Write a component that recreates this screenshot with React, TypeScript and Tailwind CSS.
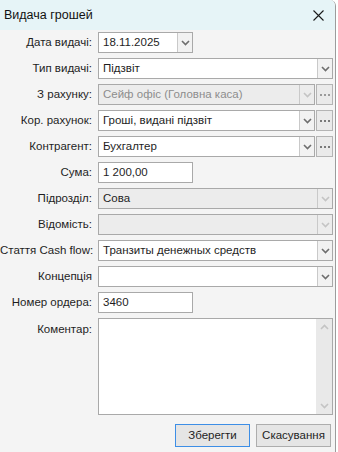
import { ReactNode } from "react";

const font = { fontFamily: '"Liberation Sans", Arial, sans-serif' };

function Chevron({ up = false, dim = false }: { up?: boolean; dim?: boolean }) {
  return (
    <svg width="9" height="6" viewBox="0 0 9 6" className={up ? "rotate-180" : ""}>
      <polyline
        points="1,1 4.5,4.5 8,1"
        fill="none"
        stroke={dim ? "#c4c4c4" : "#6e6e6e"}
        strokeWidth="1.6"
      />
    </svg>
  );
}

function Dots({ dim = false }: { dim?: boolean }) {
  return (
    <button className="w-[17px] h-[21px] shrink-0 border border-[#b4b4b4] bg-[#eaeaea] flex items-center justify-center gap-[2px]">
      {[0, 1, 2].map((i) => (
        <span key={i} className={`w-[2px] h-[2px] ${dim ? "bg-[#9a9a9a]" : "bg-[#7a7a7a]"}`} />
      ))}
    </button>
  );
}

function Row({ label, children, top = false }: { label: string; children: ReactNode; top?: boolean }) {
  return (
    <div className={`flex ${top ? "items-start" : "items-center"}`}>
      <div className={`w-[93px] shrink-0 text-right pr-[1px] text-[11.5px] text-[#1e1e1e] whitespace-nowrap ${top ? "pt-[3px]" : ""}`}>
        {label}
      </div>
      <div className="ml-[5px] flex-1 flex gap-px">{children}</div>
    </div>
  );
}

function Select({
  value = "",
  disabled = false,
  greyText,
  width,
}: {
  value?: string;
  disabled?: boolean;
  greyText?: boolean;
  width?: string;
}) {
  const grey = greyText ?? disabled;
  return (
    <div
      className={`h-[21px] flex border border-[#a9a9a9] ${disabled ? "bg-[#ececec]" : "bg-white"} ${width ?? "flex-1"}`}
    >
      <div className={`flex-1 px-[4px] flex items-center text-[11.5px] truncate ${grey ? "text-[#8c8c8c]" : "text-[#1e1e1e]"}`}>
        {value}
      </div>
      <div className={`w-[15px] border-l border-[#c9c9c9] flex items-center justify-center ${disabled ? "bg-[#ececec]" : "bg-[#f2f2f2]"}`}>
        <Chevron dim={disabled} />
      </div>
    </div>
  );
}

function Input({ value }: { value: string }) {
  return (
    <div className="w-[95px] h-[21px] border border-[#a9a9a9] bg-white px-[4px] flex items-center text-[11.5px] text-[#1e1e1e]">
      {value}
    </div>
  );
}

export default function App() {
  return (
    <div className="w-[338px] h-[452px] bg-white" style={font}>
      <div className="w-[336px] h-[452px] flex flex-col border-r border-[#9c9c9c] rounded-tr-[6px] overflow-hidden">
        <div className="h-[30px] shrink-0 bg-[#e6f4f7] flex items-center justify-between pl-[4px] pr-[11px]">
          <span className="text-[12.5px] text-[#111]">Видача грошей</span>
          <svg width="11" height="11" viewBox="0 0 11 11">
            <path d="M0.5 0.5 L10.5 10.5 M10.5 0.5 L0.5 10.5" stroke="#1a1a1a" strokeWidth="1.1" />
          </svg>
        </div>

        <div className="flex-1 bg-[#f4f4f4] pt-[2px] pr-[2px] flex flex-col gap-[5px]">
          <Row label="Дата видачі:">
            <Select value="18.11.2025" width="w-[95px]" />
          </Row>
          <Row label="Тип видачі:">
            <Select value="Підзвіт" />
          </Row>
          <Row label="З рахунку:">
            <Select value="Сейф офіс (Головна каса)" disabled />
            <Dots dim />
          </Row>
          <Row label="Кор. рахунок:">
            <Select value="Гроші, видані підзвіт" />
            <Dots />
          </Row>
          <Row label="Контрагент:">
            <Select value="Бухгалтер" />
            <Dots />
          </Row>
          <Row label="Сума:">
            <Input value="1 200,00" />
          </Row>
          <Row label="Підрозділ:">
            <Select value="Сова" disabled greyText={false} />
          </Row>
          <Row label="Відомість:">
            <Select disabled />
          </Row>
          <Row label="Стаття Cash flow:">
            <Select value="Транзиты денежных средств" />
          </Row>
          <Row label="Концепція">
            <Select />
          </Row>
          <Row label="Номер ордера:">
            <Input value="3460" />
          </Row>
          <Row label="Коментар:" top>
            <div className="flex-1 h-[97px] border border-[#a9a9a9] bg-white flex">
              <div className="flex-1" />
              <div className="w-[16px] bg-[#e9e9e9] flex flex-col items-center justify-between py-[5px]">
                <Chevron up dim />
                <Chevron dim />
              </div>
            </div>
          </Row>

          <div className="flex justify-end gap-[6px] pr-[2px] mt-[4px]">
            <button className="w-[75px] h-[23px] border border-[#3d8ee6] bg-[#e5e5e5] text-[11.5px] text-[#1e1e1e]">
              Зберегти
            </button>
            <button className="w-[75px] h-[23px] border border-[#adadad] bg-[#e5e5e5] text-[11.5px] text-[#1e1e1e]">
              Скасування
            </button>
          </div>
        </div>
      </div>
    </div>
  );
}
